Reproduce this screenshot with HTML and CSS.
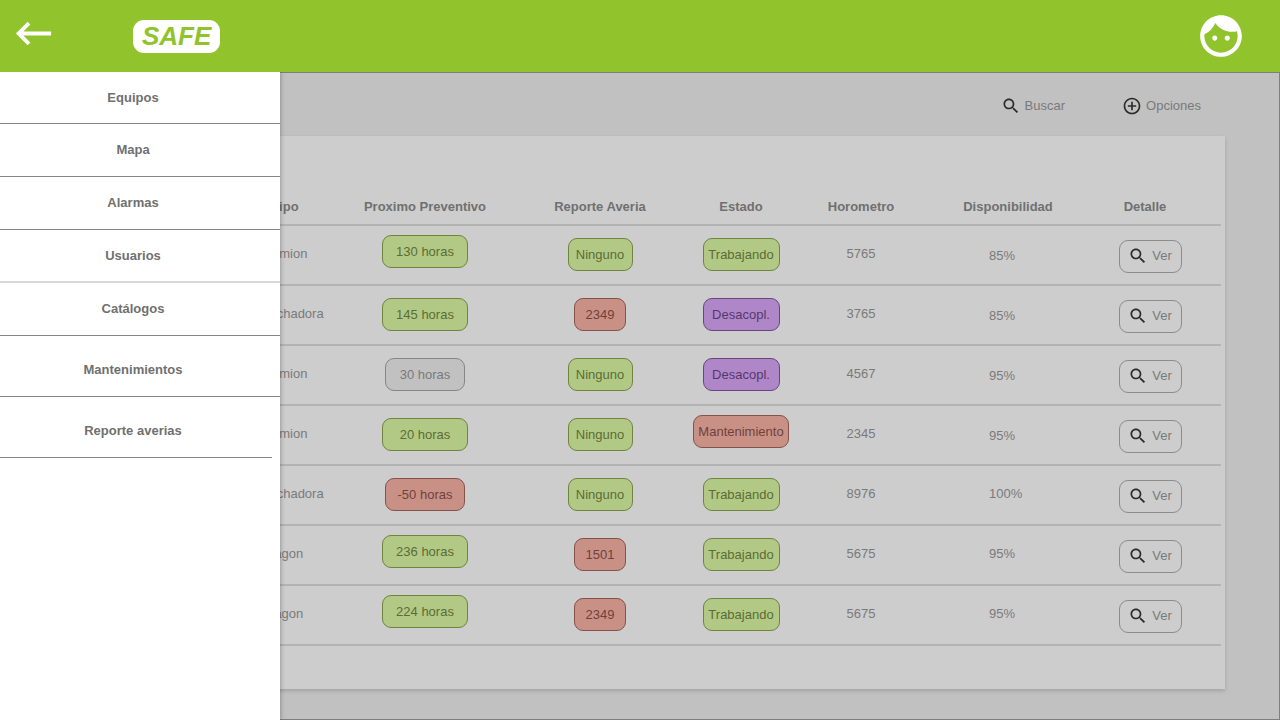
FILE: index.html
```html
<!DOCTYPE html>
<html lang="es">
<head>
<meta charset="utf-8">
<meta name="viewport" content="width=device-width, initial-scale=1">
<title>SAFE - Equipos</title>
<link rel="stylesheet" href="styles.css">
</head>
<body>
<svg class="sprite" aria-hidden="true">
  <symbol id="search" viewBox="0 0 24 24"><path d="M15.5 14h-.79l-.28-.27C15.41 12.59 16 11.11 16 9.5 16 5.91 13.09 3 9.5 3S3 5.91 3 9.5 5.91 16 9.5 16c1.61 0 3.09-.59 4.23-1.57l.27.28v.79l5 4.99L20.49 19l-4.99-5zm-6 0C7.01 14 5 11.99 5 9.5S7.01 5 9.5 5 14 7.01 14 9.5 11.99 14 9.5 14z"/></symbol>
</svg>
<header class="topbar">
  <button class="back" type="button" aria-label="Volver">
    <svg class="back-icon" viewBox="0 0 24 24"><path d="M21 11H6.83l3.58-3.59L9 6l-6 6 6 6 1.41-1.41L6.83 13H21z"/></svg>
  </button>
  <a class="logo" href="#">SAFE</a>
  <button class="profile" type="button" aria-label="Perfil">
    <svg class="profile-icon" viewBox="0 0 24 24"><path d="M9 11.75c-.69 0-1.25.56-1.25 1.25s.56 1.25 1.25 1.25 1.25-.56 1.25-1.25-.56-1.25-1.25-1.25zm6 0c-.69 0-1.25.56-1.25 1.25s.56 1.25 1.25 1.25 1.25-.56 1.25-1.25-.56-1.25-1.25-1.25zM12 2C6.48 2 2 6.48 2 12s4.48 10 10 10 10-4.48 10-10S17.52 2 12 2zm0 18c-4.41 0-8-3.59-8-8 0-.29.02-.58.05-.86 2.36-1.05 4.23-2.98 5.21-5.37C11.07 8.33 14.05 10 17.42 10c.78 0 1.53-.09 2.25-.26.21.71.33 1.47.33 2.26 0 4.41-3.59 8-8 8z"/></svg>
  </button>
</header>
<div class="stage">
  <nav class="drawer" aria-label="Principal">
    <a class="drawer-item drawer-item-first" href="#">Equipos</a>
    <a class="drawer-item" href="#">Mapa</a>
    <a class="drawer-item" href="#">Alarmas</a>
    <a class="drawer-item drawer-item-soft" href="#">Usuarios</a>
    <a class="drawer-item" href="#">Catálogos</a>
    <a class="drawer-item drawer-item-tall" href="#">Mantenimientos</a>
    <a class="drawer-item drawer-item-tall drawer-item-last" href="#">Reporte averias</a>
  </nav>
  <main class="content">
    <div class="toolbar">
      <button class="tool" type="button"><svg class="icon"><use href="#search"/></svg>Buscar</button>
      <button class="tool" type="button"><svg class="icon" viewBox="0 0 24 24"><path d="M13 7h-2v4H7v2h4v4h2v-4h4v-2h-4V7zm-1-5C6.48 2 2 6.48 2 12s4.48 10 10 10 10-4.48 10-10S17.52 2 12 2zm0 18c-4.41 0-8-3.59-8-8s3.59-8 8-8 8 3.59 8 8-3.59 8-8 8z"/></svg>Opciones</button>
    </div>
    <section class="card">
      <table class="fleet">
        <colgroup>
          <col class="col-type"><col class="col-next"><col class="col-report"><col class="col-state"><col class="col-hours"><col class="col-avail"><col class="col-detail">
        </colgroup>
        <thead>
          <tr><th>Tipo</th><th>Proximo Preventivo</th><th>Reporte Averia</th><th>Estado</th><th>Horometro</th><th>Disponibilidad</th><th class="detail-head">Detalle</th></tr>
        </thead>
        <tbody>
          <tr><td>Camion</td><td class="high"><span class="pill wide green">130 horas</span></td><td><span class="pill mid green">Ninguno</span></td><td><span class="pill state green">Trabajando</span></td><td>5765</td><td class="avail low">85%</td><td class="detail low"><button class="view" type="button"><svg class="icon"><use href="#search"/></svg>Ver</button></td></tr>
          <tr><td>Cosechadora</td><td><span class="pill wide green">145 horas</span></td><td><span class="pill small red">2349</span></td><td><span class="pill state purple">Desacopl.</span></td><td>3765</td><td class="avail low">85%</td><td class="detail low"><button class="view" type="button"><svg class="icon"><use href="#search"/></svg>Ver</button></td></tr>
          <tr><td>Camion</td><td><span class="pill due gray">30 horas</span></td><td><span class="pill mid green">Ninguno</span></td><td><span class="pill state purple">Desacopl.</span></td><td>4567</td><td class="avail low">95%</td><td class="detail low"><button class="view" type="button"><svg class="icon"><use href="#search"/></svg>Ver</button></td></tr>
          <tr><td>Camion</td><td><span class="pill wide green">20 horas</span></td><td><span class="pill mid green">Ninguno</span></td><td class="high"><span class="pill state red">Mantenimiento</span></td><td>2345</td><td class="avail low">95%</td><td class="detail low"><button class="view" type="button"><svg class="icon"><use href="#search"/></svg>Ver</button></td></tr>
          <tr><td>Cosechadora</td><td><span class="pill due red">-50 horas</span></td><td><span class="pill mid green">Ninguno</span></td><td><span class="pill state green">Trabajando</span></td><td>8976</td><td class="avail">100%</td><td class="detail low"><button class="view" type="button"><svg class="icon"><use href="#search"/></svg>Ver</button></td></tr>
          <tr><td>Vagon</td><td class="high"><span class="pill wide green">236 horas</span></td><td><span class="pill small red">1501</span></td><td><span class="pill state green">Trabajando</span></td><td>5675</td><td class="avail">95%</td><td class="detail low"><button class="view" type="button"><svg class="icon"><use href="#search"/></svg>Ver</button></td></tr>
          <tr><td>Vagon</td><td class="high"><span class="pill wide green">224 horas</span></td><td><span class="pill small red">2349</span></td><td><span class="pill state green">Trabajando</span></td><td>5675</td><td class="avail">95%</td><td class="detail low"><button class="view" type="button"><svg class="icon"><use href="#search"/></svg>Ver</button></td></tr>
        </tbody>
      </table>
    </section>
  </main>
</div>
</body>
</html>
```
FILE: styles.css
```css
* { box-sizing: border-box; }

body {
  margin: 0;
  min-height: 100vh;
  display: flex;
  flex-direction: column;
  font: 13px/16px "Liberation Sans", Arial, sans-serif;
  color: #7a7a7a;
}

button {
  margin: 0;
  padding: 0;
  border: 0;
  background: none;
  color: inherit;
  font: inherit;
  cursor: pointer;
}

a { color: inherit; text-decoration: none; }

.sprite { display: none; }

.icon { width: 20px; height: 20px; fill: #2b2b2b; flex: none; }

.topbar {
  display: flex;
  align-items: center;
  height: 72px;
  padding: 0 34px 0 10px;
  background: #90c32c;
}

.back { padding-bottom: 6px; }
.back-icon { display: block; width: 47px; height: 47px; fill: #fff; }

.logo {
  margin-left: 76px;
  padding: 0 9px;
  border-radius: 11px;
  background: #fff;
  color: #90c32c;
  font-size: 26px;
  line-height: 33px;
  font-weight: bold;
  font-style: italic;
}

.profile { margin-left: auto; }
.profile-icon { display: block; width: 50px; height: 50px; fill: #fff; }

.stage { position: relative; flex: 1; display: flex; }

/* The open menu lies over the dimmed page. */
.drawer {
  position: absolute;
  top: 0;
  bottom: 0;
  left: 0;
  width: 280px;
  background: #fff;
  box-shadow: 1px 0 4px rgba(0, 0, 0, 0.25);
  clip-path: inset(0 -8px 0 0);
}

.drawer-item {
  display: flex;
  align-items: center;
  justify-content: center;
  height: 53px;
  padding-right: 14px;
  border-bottom: 1px solid #858585;
  color: #707070;
  font-weight: bold;
}

.drawer-item-first { height: 52px; }
.drawer-item-soft { border-bottom: 2px solid #d9d9d9; }
.drawer-item-tall { height: 61px; padding-top: 8px; }
.drawer-item-last { margin-right: 8px; padding-right: 6px; }

.content {
  flex: 1;
  display: flex;
  flex-direction: column;
  border: 1px solid #7e7e7e;
  background: #c1c1c1;
}

.toolbar {
  display: flex;
  align-items: center;
  justify-content: flex-end;
  gap: 57px;
  height: 63px;
  padding: 2px 78px 0 0;
}

.tool { display: flex; align-items: center; gap: 4px; }

.card {
  flex: 1;
  margin: 0 54px 30px;
  padding: 54px 4px 43px 180px;
  background: #cdcdcd;
  box-shadow: 0 2px 4px rgba(0, 0, 0, 0.16);
}

.fleet { width: 100%; table-layout: fixed; border-spacing: 0; }

.col-type { width: 100px; }
.col-next { width: 180px; }
.col-report { width: 170px; }
.col-state { width: 112px; }
.col-hours { width: 128px; }
.col-avail { width: 166px; }
.col-detail { width: 130px; }

.fleet th,
.fleet td {
  padding: 0;
  border-bottom: 2px solid #b3b3b3;
  text-align: center;
}

.fleet th { height: 36px; color: #707070; }
.fleet td { height: 60px; padding-bottom: 2px; }
.fleet .high { padding-bottom: 8px; }
.fleet .low { padding-top: 2px; padding-bottom: 0; }
.fleet .avail { padding-left: 64px; text-align: left; }
.fleet .detail { padding-right: 12px; }
.fleet .detail-head { padding-right: 22px; }

.pill {
  display: inline-block;
  padding: 0 4px;
  border: 1px solid;
  border-radius: 9px;
  line-height: 31px;
  vertical-align: middle;
}

.wide { min-width: 86px; }
.due { min-width: 80px; }
.mid { min-width: 65px; }
.small { min-width: 52px; }
.state { min-width: 77px; }

.green { background: #b2c986; border-color: #70843f; color: #5b6c34; }
.red { background: #c99186; border-color: #84524b; color: #70413a; }
.purple { background: #af87c9; border-color: #67477b; color: #573769; }
.gray { background: #c1c1c1; border-color: #868686; }

.view {
  display: inline-flex;
  align-items: center;
  justify-content: center;
  gap: 4px;
  width: 63px;
  height: 33px;
  border: 1px solid #8c8c8c;
  border-radius: 9px;
  vertical-align: middle;
}
```
